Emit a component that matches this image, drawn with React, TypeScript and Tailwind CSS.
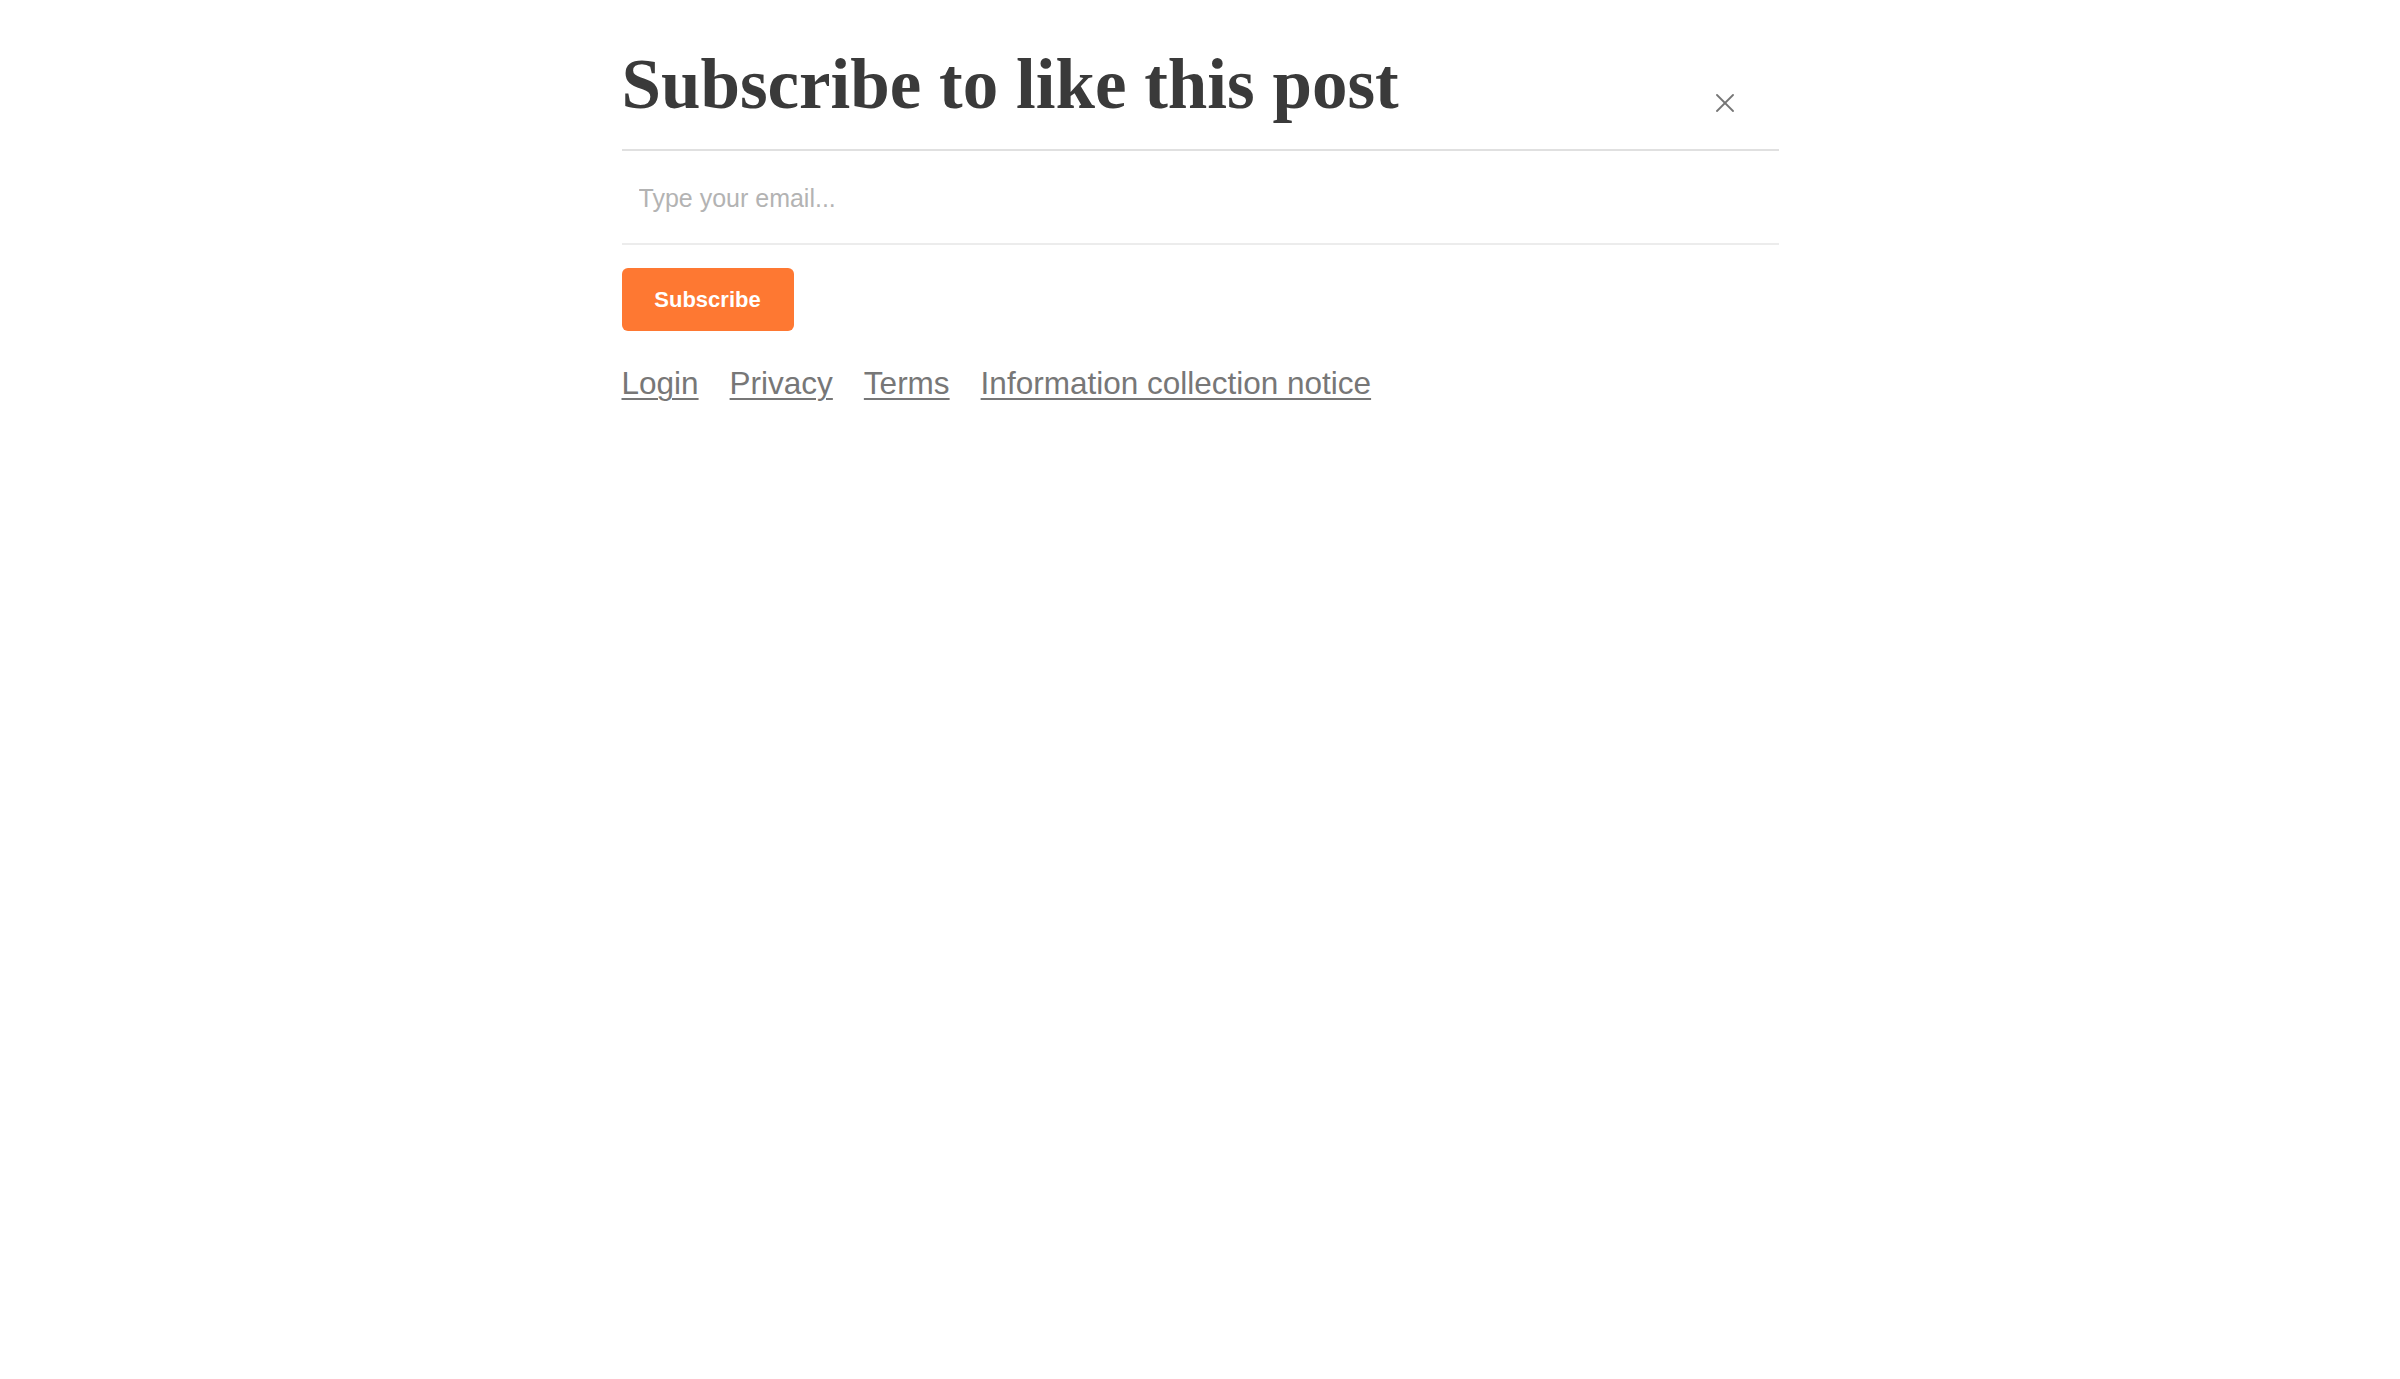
import React from "react";

const sans = { fontFamily: '"Liberation Sans", Arial, sans-serif' };

function CloseIcon() {
  return (
    <svg width="18" height="18" viewBox="0 0 18 18" fill="none" stroke="#757575" strokeWidth="1.8" strokeLinecap="round">
      <path d="M1 1L17 17" />
      <path d="M17 1L1 17" />
    </svg>
  );
}

export default function App() {
  const links = ["Login", "Privacy", "Terms", "Information collection notice"];
  return (
    <div className="min-h-screen w-full bg-white">
      <div className="mx-auto w-[1157px]">
        <div className="flex items-start justify-between border-b-2 border-[#e0e0e0] pt-[49px] pb-[29px]">
          <h1
            className="text-[71px] font-bold leading-none text-[#3a3a3a]"
            style={{ fontFamily: '"Liberation Serif", "Times New Roman", serif' }}
          >
            Subscribe to like this post
          </h1>
          <button type="button" aria-label="Close" className="mt-[45px] mr-[45px] flex h-[18px] w-[18px] items-center justify-center">
            <CloseIcon />
          </button>
        </div>

        <div className="border-b-2 border-[#ececec]">
          <input
            type="email"
            placeholder="Type your email..."
            className="block h-[92px] w-full bg-white pt-[2px] pl-[17px] text-[25px] text-[#333] outline-none placeholder:text-[#b3b3b3]"
            style={sans}
          />
        </div>

        <button
          type="button"
          className="mt-[23px] flex h-[63px] w-[172px] items-center justify-center rounded-[6px] bg-[#fe7832] text-[22px] font-bold text-white"
          style={sans}
        >
          Subscribe
        </button>

        <div className="mt-[37px] flex gap-[31px] text-[31.5px] leading-none text-[#777777]" style={sans}>
          {links.map((l) => (
            <a key={l} href="#" className="underline decoration-[2px] underline-offset-[4px]">
              {l}
            </a>
          ))}
        </div>
      </div>
    </div>
  );
}
